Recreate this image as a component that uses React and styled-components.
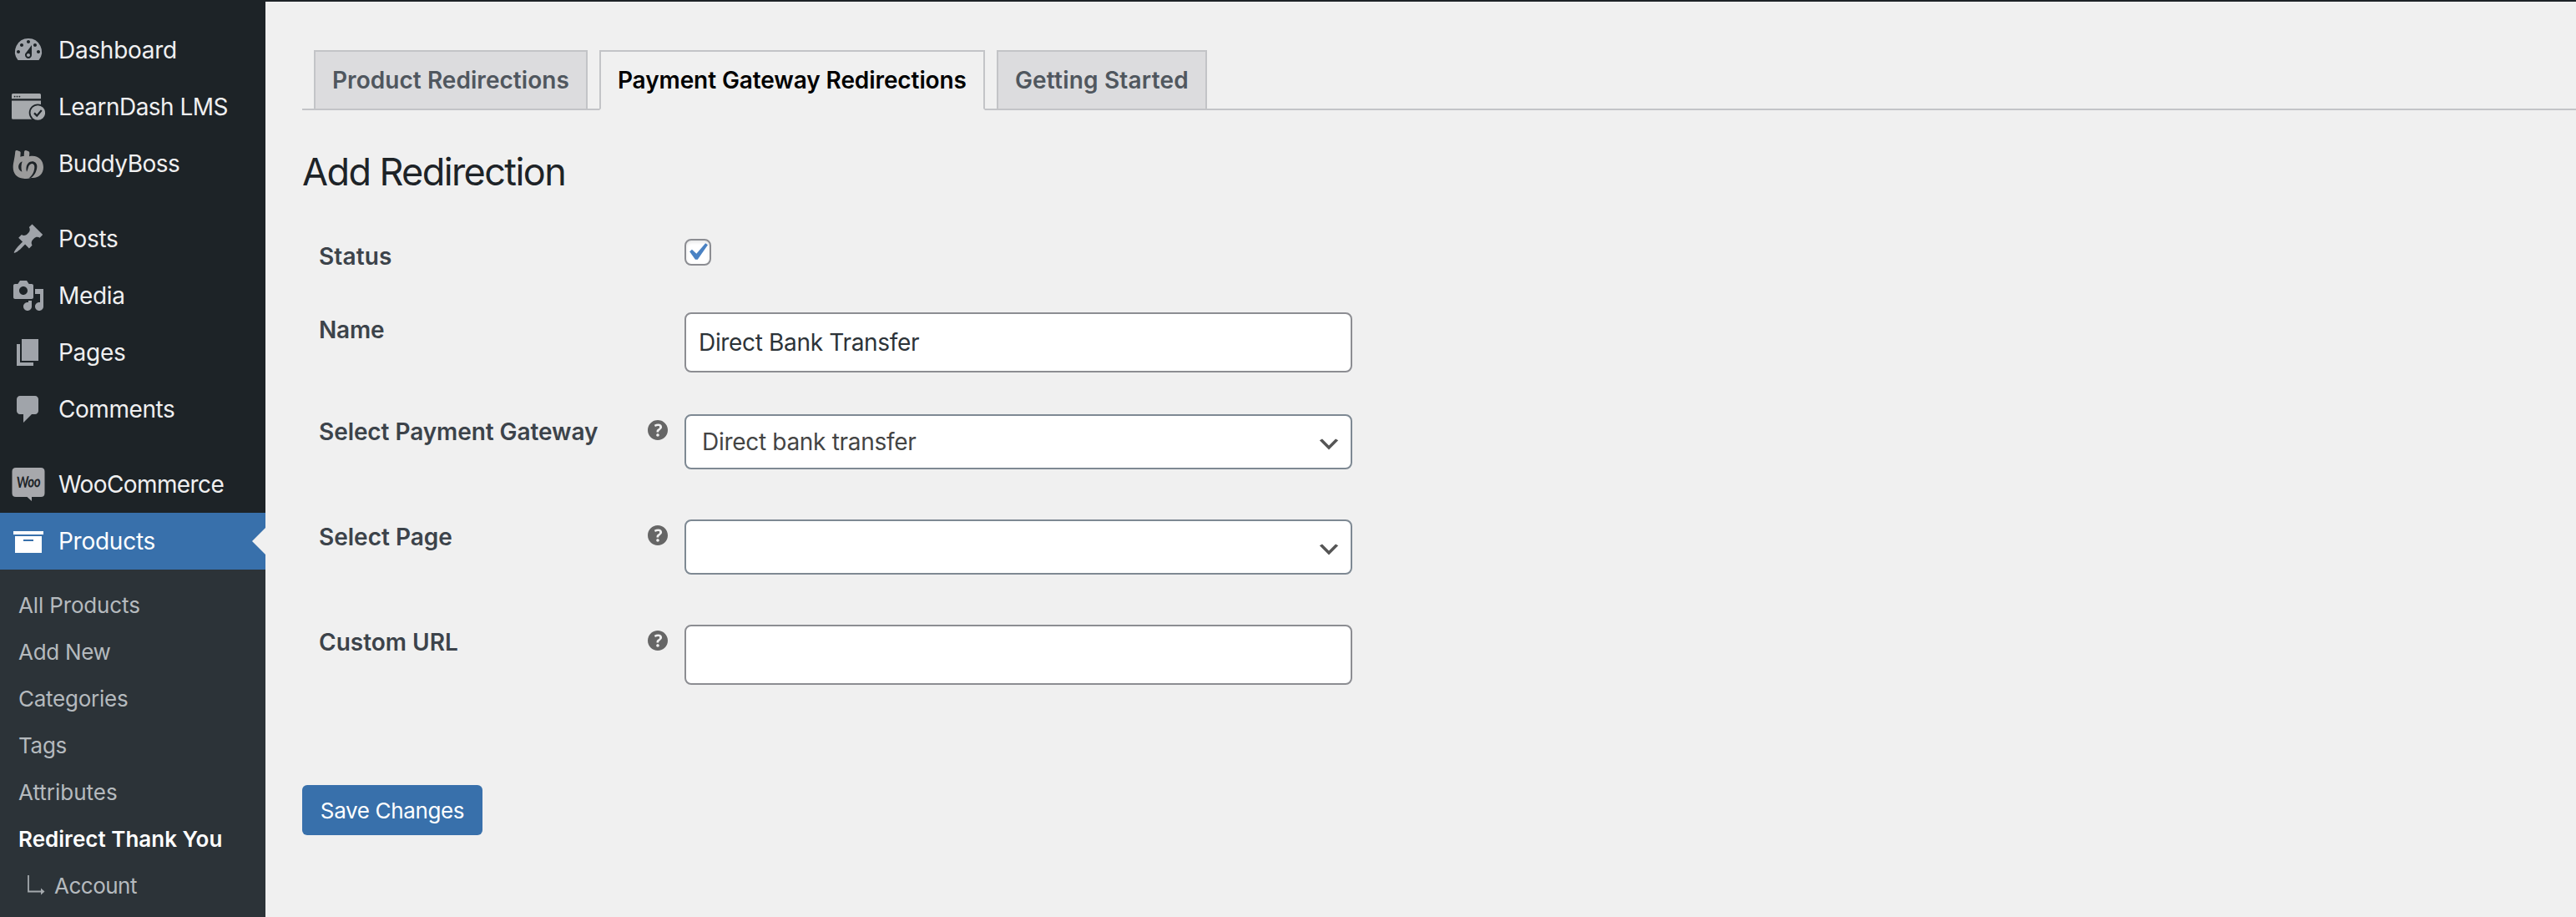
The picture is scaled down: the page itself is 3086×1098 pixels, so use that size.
import React from "react";
import styled, { createGlobalStyle } from "styled-components";

const GlobalStyle = createGlobalStyle`
  * { box-sizing: border-box; }
  body {
    margin: 0;
    background: #f0f0f0;
    color: #3c434a;
    font-family: Inter, "Liberation Sans", sans-serif;
    font-size: 28px;
  }
`;

const Page = styled.div`
  display: flex;
  height: 100vh;
  overflow: hidden;
`;

const Sidebar = styled.nav`
  display: flex;
  flex-direction: column;
  flex: none;
  width: 318px;
  padding-top: 26px;
  background: #1d2327;
`;

const MenuGroup = styled.div`
  display: flex;
  flex-direction: column;
  margin-bottom: 22px;
  &:last-of-type { margin-bottom: 0; flex: 1; }
`;

const MenuItem = styled.a`
  position: relative;
  display: flex;
  align-items: center;
  flex: none;
  height: 68px;
  padding-left: 14px;
  gap: 16px;
  color: ${(p) => (p.$current ? "#fff" : "#f0f0f1")};
  background: ${(p) => (p.$current ? "#3870ab" : "transparent")};
  letter-spacing: ${(p) => p.$tracking}px;
  white-space: nowrap;
  svg { flex: none; fill: ${(p) => (p.$current ? "#fff" : "#a0a4aa")}; }
`;

const CurrentArrow = styled.span`
  position: absolute;
  right: 0;
  top: 18px;
  border: 16px solid transparent;
  border-left-width: 0;
  border-right-color: #f0f0f0;
`;

const Submenu = styled.div`
  display: flex;
  flex-direction: column;
  flex: 1;
  padding-top: 14px;
  background: #2c3338;
`;

const SubmenuItem = styled.a`
  display: flex;
  align-items: center;
  flex: none;
  gap: 11px;
  height: 56px;
  padding-left: ${(p) => (p.$nested ? 32 : 22)}px;
  font-size: 26px;
  font-weight: ${(p) => (p.$current ? 600 : 400)};
  color: ${(p) => (p.$current ? "#fff" : "#b5babe")};
  letter-spacing: ${(p) => p.$tracking}px;
  white-space: nowrap;
`;

const Main = styled.main`
  flex: 1;
  min-width: 0;
  border-top: 2px solid #1d2327;
  padding: 58px 0 0 44px;
`;

const Tabs = styled.div`
  display: flex;
  gap: 14px;
  height: 72px;
  padding-left: 14px;
  border-bottom: 2px solid #c3c4c7;
`;

const Tab = styled.a`
  flex: none;
  height: ${(p) => (p.$active ? 72 : 70)}px;
  padding: 0 20px;
  border: 2px solid #c3c4c7;
  border-bottom: ${(p) => (p.$active ? "2px solid #f0f0f0" : "0")};
  background: ${(p) => (p.$active ? "#f0f0f0" : "#dcdcde")};
  color: ${(p) => (p.$active ? "#000" : "#50575e")};
  font-weight: 600;
  line-height: 68px;
  letter-spacing: ${(p) => p.$tracking}px;
  white-space: nowrap;
`;

const Heading = styled.h1`
  margin: 44px 0 0;
  color: #1d2327;
  font-size: 45px;
  font-weight: 400;
  line-height: 60px;
  letter-spacing: -1.6px;
`;

const Form = styled.form`
  display: flex;
  flex-direction: column;
  padding: 34px 0 0 20px;
`;

const FormRow = styled.div`
  display: grid;
  grid-template-columns: 394px 44px 800px;
  align-items: start;
  height: ${(p) => p.$height}px;
  padding-top: 16px;
`;

const Label = styled.label`
  padding-top: 3px;
  line-height: 36px;
  font-weight: 600;
  letter-spacing: ${(p) => p.$tracking || 0}px;
`;

const HelpSlot = styled.span`
  display: flex;
  padding-top: 7px;
`;

const Checkbox = styled.span`
  display: flex;
  align-items: center;
  justify-content: center;
  width: 32px;
  height: 32px;
  border: 2px solid #8c8d92;
  border-radius: 8px;
  background: #fff;
  box-shadow: inset 0 2px 4px rgba(0, 0, 0, 0.1);
  svg { flex: none; margin-right: 2px; }
`;

const TextInput = styled.input`
  width: 800px;
  height: 72px;
  padding: 0 15px;
  border: 2px solid #8c8d92;
  border-radius: 8px;
  background: #fff;
  color: #2c3338;
  font: inherit;
  letter-spacing: -0.33px;
  outline: none;
`;

const SelectBox = styled.div`
  display: flex;
  align-items: center;
  justify-content: space-between;
  height: 66px;
  padding: 0 10px 0 19px;
  border: 2px solid #7e8993;
  border-radius: 8px;
  background: #fff;
  color: #444;
  letter-spacing: -0.3px;
  svg { flex: none; margin-top: 6px; }
`;

const SaveButton = styled.button`
  display: block;
  width: 216px;
  height: 60px;
  margin: 82px 0 0 -20px;
  padding: 1px 0 0;
  border: 0;
  border-radius: 6px;
  background: #3870ab;
  color: #fff;
  font: 400 26px/59px Inter, "Liberation Sans", sans-serif;
  letter-spacing: -0.36px;
`;

const Glyph = ({ d }) => (
  <svg width="40" height="40" viewBox="0 0 20 20">
    <path d={d} />
  </svg>
);

const LearnDashIcon = () => (
  <svg width="40" height="40" viewBox="0 0 40 40">
    <path fill="#a7aaad" d="M1.5 4H33.5Q35 4 35 5.500V10.300H0V5.500Q0 4 1.500 4zM0 12.600H35V34.700H1.500Q0 34.700 0 33.200z" />
    <circle cx="31.300" cy="27" r="10.600" fill="#1d2327" />
    <circle cx="31.300" cy="27" r="8.800" fill="#a7aaad" />
    <path d="M27 27.400l3.200 3.200 5.600-6.600" fill="none" stroke="#1d2327" strokeWidth="2.200" />
    <g fill="#1d2327">
      <circle cx="3.600" cy="7.600" r="0.900" />
      <circle cx="6.500" cy="7.600" r="0.900" />
      <circle cx="9.400" cy="7.600" r="0.900" />
    </g>
  </svg>
);

const BuddyBossIcon = () => (
  <svg width="40" height="40" viewBox="42 228 120 120">
    <path
      fill="#9b9b9b"
      d="M55 244Q56 239 61 240L71 244Q75 246 74 250L73 263Q80 260 86 261L87 245Q88 239 93 240L103 244Q106 246 106 250L105 262C134 255 156 274 156 301C156 326 137 342 113 339Q99 343 84 341C61 340 47 324 47 301C47 286 52 274 55 244z"
    />
    <path fill="#1d2327" d="M80 280C63 286 61 310 79 317C75 304 76 292 80 280z" />
    <path fill="#1d2327" d="M96 317C92 302 96 286 108 281C120 276 133 283 133 297C133 313 125 330 110 340L103 341C116 330 124 316 124 300C124 290 116 285 109 290C100 296 102 307 96 317z" />
  </svg>
);

const WooIcon = () => (
  <svg width="40" height="40" viewBox="0 0 40 40">
    <path fill="#a7a8ac" d="M5 0H35Q39.500 0 39.500 4.500V30.500Q39.500 35 35 35H24V40L18.500 35H5Q.5 35 .5 30.500V4.500Q.5 0 5 0z" />
    <text x="6" y="23.500" fill="#1d2327" fontFamily="Lato, sans-serif" fontWeight="700" fontStyle="italic" fontSize="18.500" textLength="28" lengthAdjust="spacingAndGlyphs" transform="rotate(-3 20 18)">Woo</text>
  </svg>
);

const ChildArrow = () => (
  <svg width="22" height="24" viewBox="0 0 22 24">
    <path d="M2 0V19.500H18" fill="none" stroke="#a4a9ad" strokeWidth="1.800" />
    <path d="M17 15.500L21.500 19.500L17 23.500z" fill="#a4a9ad" />
  </svg>
);

const HelpTip = () => (
  <HelpSlot>
    <svg width="24" height="24" viewBox="3 3 14 14" fill="#666">
      <path d="M17 10c0-3.870-3.140-7-7-7-3.870 0-7 3.130-7 7s3.130 7 7 7c3.860 0 7-3.130 7-7zm-6.300 1.480H9.140v-.43c0-.38.080-.7.240-.98s.460-.57.880-.89c.41-.29.680-.53.810-.71.140-.18.200-.39.200-.62 0-.25-.09-.44-.28-.58-.19-.13-.45-.19-.79-.19-.58 0-1.250.190-2 .570l-.64-1.280c.870-.49 1.800-.74 2.770-.74.810 0 1.450.200 1.920.580.480.390.710.910.710 1.550 0 .430-.09.800-.29 1.110-.19.320-.57.670-1.110 1.060-.38.280-.61.490-.71.630-.1.150-.15.340-.15.570v.350zm-1.470 2.740c-.18-.17-.27-.42-.27-.73 0-.33.080-.58.260-.75s.430-.25.770-.25c.320 0 .570.090.750.260s.270.420.270.740c0 .300-.09.550-.27.720-.18.180-.43.270-.75.270-.33 0-.58-.09-.76-.26z" />
    </svg>
  </HelpSlot>
);

const SelectField = ({ value }) => (
  <SelectBox>
    <span>{value}</span>
    <svg width="32" height="32" viewBox="0 0 20 20">
      <path d="M5 6l5 5 5-5 2 1-7 7-7-7 2-1z" fill="#555" />
    </svg>
  </SelectBox>
);

const PATHS = {
  dashboard:
    "M3.76 16h12.48A7.998 7.998 0 0 0 10 3a7.998 7.998 0 0 0-6.240 13zM10 4c.55 0 1 .45 1 1s-.45 1-1 1-1-.45-1-1 .45-1 1-1zM6 6c.55 0 1 .45 1 1s-.45 1-1 1-1-.45-1-1 .45-1 1-1zm8 0c.55 0 1 .45 1 1s-.45 1-1 1-1-.45-1-1 .45-1 1-1zm-5.370 5.550L12 7v6c0 1.100-.9 2-2 2s-2-.9-2-2c0-.57.240-1.080.630-1.450zM4 10c.55 0 1 .45 1 1s-.45 1-1 1-1-.45-1-1 .45-1 1-1zm12 0c.55 0 1 .45 1 1s-.45 1-1 1-1-.45-1-1 .45-1 1-1zm-5 3c0-.55-.45-1-1-1s-1 .45-1 1 .45 1 1 1 1-.45 1-1z",
  posts:
    "M10.440 3.020l1.820-1.820 6.360 6.350-1.830 1.820c-1.050-.68-2.480-.57-3.410.36l-.75.75c-.92.930-1.040 2.350-.35 3.410l-1.830 1.820-2.410-2.410-2.800 2.790c-.42.420-3.380 2.710-3.800 2.290s1.860-3.390 2.280-3.810l2.790-2.790L4.100 9.360l1.830-1.820c1.050.690 2.480.570 3.400-.36l.75-.75c.930-.92 1.050-2.350.360-3.410z",
  media:
    "M13 11V4c0-.55-.45-1-1-1h-1.670L9 1H5L3.670 3H2c-.55 0-1 .45-1 1v7c0 .55.450 1 1 1h10c.55 0 1-.45 1-1zM7 4.500c1.380 0 2.500 1.120 2.500 2.500S8.380 9.500 7 9.500 4.500 8.380 4.500 7 5.620 4.500 7 4.500zM14 6h5v10.500c0 1.380-1.120 2.500-2.500 2.500S14 17.880 14 16.500s1.120-2.500 2.500-2.500c.17 0 .34.020.5.050V9h-3V6zm-4 8.050V13h2v3.500c0 1.380-1.120 2.500-2.500 2.500S7 17.880 7 16.500 8.120 14 9.500 14c.17 0 .34.020.5.050z",
  pages: "M6 15V2h10v13H6zm-1 1h8v2H3V5h2v11z",
  comments: "M5 2h9c1.100 0 2 .9 2 2v7c0 1.100-.9 2-2 2h-2l-5 5v-5H5c-1.100 0-2-.9-2-2V4c0-1.100.9-2 2-2z",
  products: "M19 4v2H1V4h18zM2 7h16v10H2V7zm11 3V9H7v1h6z",
};

const MENU = [
  [
    { label: "Dashboard", icon: <Glyph d={PATHS.dashboard} />, tracking: -0.28 },
    { label: "LearnDash LMS", icon: <LearnDashIcon />, tracking: -0.54 },
    { label: "BuddyBoss", icon: <BuddyBossIcon />, tracking: -0.5 },
  ],
  [
    { label: "Posts", icon: <Glyph d={PATHS.posts} />, tracking: -0.3 },
    { label: "Media", icon: <Glyph d={PATHS.media} />, tracking: -0.3 },
    { label: "Pages", icon: <Glyph d={PATHS.pages} />, tracking: -0.3 },
    { label: "Comments", icon: <Glyph d={PATHS.comments} />, tracking: -0.44 },
  ],
  [
    { label: "WooCommerce", icon: <WooIcon />, tracking: -0.6 },
    { label: "Products", icon: <Glyph d={PATHS.products} />, tracking: -0.26, current: true },
  ],
];

const SUBMENU = [
  { label: "All Products", tracking: -0.15 },
  { label: "Add New", tracking: -0.3 },
  { label: "Categories", tracking: -0.24 },
  { label: "Tags", tracking: -0.3 },
  { label: "Attributes", tracking: 0 },
  { label: "Redirect Thank You", tracking: 0.02, current: true },
  { label: "Account", tracking: -0.5, nested: true },
];

export default function App() {
  return (
    <>
      <GlobalStyle />
      <Page>
        <Sidebar>
          {MENU.map((group, i) => (
            <MenuGroup key={i}>
              {group.map((item) => (
                <MenuItem key={item.label} $current={item.current} $tracking={item.tracking}>
                  {item.icon}
                  {item.label}
                  {item.current && <CurrentArrow />}
                </MenuItem>
              ))}
              {i === MENU.length - 1 && (
                <Submenu>
                  {SUBMENU.map((item) => (
                    <SubmenuItem key={item.label} $current={item.current} $nested={item.nested} $tracking={item.tracking}>
                      {item.nested && <ChildArrow />}
                      {item.label}
                    </SubmenuItem>
                  ))}
                </Submenu>
              )}
            </MenuGroup>
          ))}
        </Sidebar>
        <Main>
          <Tabs>
            <Tab $tracking={0.05}>Product Redirections</Tab>
            <Tab $active $tracking={-0.09}>Payment Gateway Redirections</Tab>
            <Tab $tracking={0.2}>Getting Started</Tab>
          </Tabs>
          <Heading>Add Redirection</Heading>
          <Form>
            <FormRow $height={88}>
              <Label $tracking={0.13}>Status</Label>
              <span />
              <Checkbox>
                <svg width="42" height="42" viewBox="0 0 20 20">
                  <path d="M14.830 4.890l1.340.940-5.810 8.380H9.020L5.780 9.670l1.340-1.250 2.570 2.400z" fill="#4a82c3" />
                </svg>
              </Checkbox>
            </FormRow>
            <FormRow $height={122}>
              <Label $tracking={-0.18}>Name</Label>
              <span />
              <TextInput type="text" defaultValue="Direct Bank Transfer" />
            </FormRow>
            <FormRow $height={126}>
              <Label $tracking={-0.07}>Select Payment Gateway</Label>
              <HelpTip />
              <SelectField value="Direct bank transfer" />
            </FormRow>
            <FormRow $height={126}>
              <Label>Select Page</Label>
              <HelpTip />
              <SelectField value="" />
            </FormRow>
            <FormRow $height={126}>
              <Label>Custom URL</Label>
              <HelpTip />
              <TextInput type="text" defaultValue="" />
            </FormRow>
            <SaveButton type="button">Save Changes</SaveButton>
          </Form>
        </Main>
      </Page>
    </>
  );
}
